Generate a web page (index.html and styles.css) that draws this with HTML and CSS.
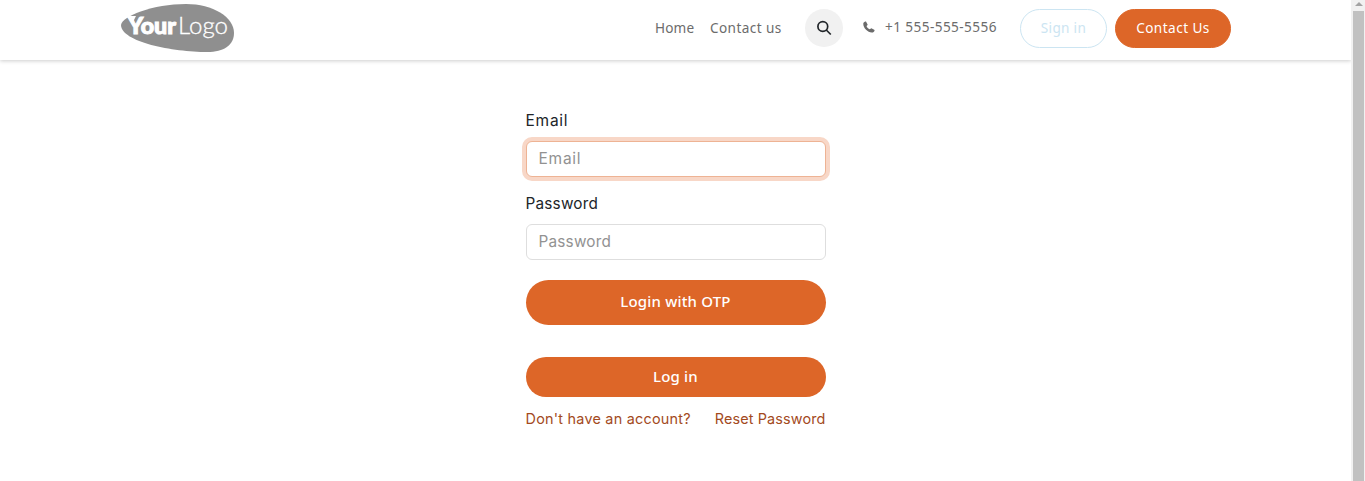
FILE: index.html
```html
<!DOCTYPE html>
<html lang="en">
<head>
<meta charset="utf-8">
<title>Login | Your Logo</title>
<link rel="stylesheet" href="styles.css">
</head>
<body>
<div class="page">
  <header class="header">
    <a class="brand">
      <svg width="114" height="50" viewBox="0 0 114 50" role="img" aria-label="Your Logo">
        <path d="M0 22C1 13 32 1 65 1C92 1 113 14 113 30C113 42 103 49 86 49C52 49 0 39 0 22Z" fill="#8f8f8f"/>
        <path d="M5 13L15 13L12 19Z" fill="#fff"/>
        <text class="logo-bold" x="7" y="31" textLength="48" lengthAdjust="spacingAndGlyphs">Your</text>
        <text class="logo-thin" x="57" y="31" textLength="50" lengthAdjust="spacingAndGlyphs">Logo</text>
      </svg>
    </a>
    <nav class="nav">
      <a class="link home">Home</a>
      <a class="link contact">Contact us</a>
    </nav>
    <button class="search" aria-label="Search">
      <svg width="16" height="16" viewBox="0 0 16 16" fill="none" stroke="#212529" stroke-width="1.7"><circle cx="6.8" cy="6.5" r="4.9"/><path d="M10.3 10L14.8 14.5"/></svg>
    </button>
    <div class="phone">
      <svg width="12" height="12" viewBox="0 0 12 12"><path d="M.4 2.1C.7 1 1.9.4 3 .4L4.7 3.7C4.7 4.2 3.5 4.8 3.6 5.2C4.1 6.4 5.3 7.6 6.7 8.3C7.2 8.4 7.9 7.2 8.4 7.3L11.6 9C11.6 10.2 10.9 11.1 9.9 11.4C5.5 12.6-.6 6.6.4 2.1Z" fill="#6b6b6b"/></svg>
      <span>+1 555-555-5556</span>
    </div>
    <a class="pill signin">Sign in</a>
    <a class="pill cta">Contact Us</a>
  </header>
  <main class="form">
    <label class="label mail" for="email">Email</label>
    <input class="input focused mail" id="email" placeholder="Email">
    <label class="label pass" for="password">Password</label>
    <input class="input pass" id="password" placeholder="Password">
    <button class="button otp">Login with OTP</button>
    <button class="button login">Log in</button>
    <div class="links"><a class="signup">Don't have an account?</a><a class="reset">Reset Password</a></div>
  </main>
</div>
<div class="scrollbar">
  <svg class="arrow" width="8" height="5" viewBox="0 0 8 5"><path d="M4 0L8 4H0Z" fill="#a3a3a3"/></svg>
  <div class="thumb"></div>
</div>
</body>
</html>
```
FILE: styles.css
```css
* { box-sizing: border-box; }
body { margin: 0; height: 481px; display: flex; overflow: hidden; background: #fff; color: #212529; font-family: Inter, sans-serif; }
.page { flex: 1; display: flex; flex-direction: column; align-items: center; }
.header { width: 100%; height: 60px; padding: 0 120px 4px 121px; display: flex; align-items: center; box-shadow: 0 1px 4px rgba(0,0,0,.2); font: 400 13.6px/20px "Noto Sans", sans-serif; color: #6c6c6c; white-space: nowrap; }
.brand { width: 114px; height: 50px; margin-right: auto; }
.brand svg { display: block; }
.logo-bold { font: 900 23px Lato, sans-serif; fill: #fff; stroke: #fff; stroke-width: 1px; }
.logo-thin { font: 300 24px Lato, sans-serif; fill: #fff; stroke: #fff; stroke-width: .3px; }
.nav { display: flex; gap: 16px; }
.home { width: 39px; letter-spacing: .15px; }
.contact { width: 72px; letter-spacing: .4px; }
.search { width: 38px; height: 38px; margin-left: 23px; padding: 0; border: 0; border-radius: 50%; background: #f1f1f1; display: grid; place-items: center; }
.phone { width: 134px; margin-left: 20px; display: flex; align-items: center; gap: 10px; padding-bottom: 2px; letter-spacing: .42px; }
.pill { height: 39px; border-radius: 20px; display: flex; align-items: center; justify-content: center; border: 1px solid; margin-top: 1px; padding-bottom: 2px; }
.signin { width: 87px; margin-left: 23px; color: #cce5f2; letter-spacing: .3px; }
.cta { width: 116px; margin-left: 8px; color: #fff; background: #dd6628; border-color: #dd6628; letter-spacing: .45px; }
.form { width: 300px; margin-top: 49px; display: flex; flex-direction: column; }
.label { font-size: 15px; line-height: 24px; margin-bottom: 8px; }
.input { width: 300px; height: 36px; padding: 0 12px 2px; border: 1px solid #dedede; border-radius: 6px; font: 400 15px Inter, sans-serif; margin-bottom: 15px; outline: 0; }
.mail { font-size: 15.5px; letter-spacing: .75px; }
.pass { font-size: 15.3px; letter-spacing: .22px; }
.input::placeholder { color: #929292; opacity: 1; }
.input.focused { border-color: #eeb394; box-shadow: 0 0 0 4px #f8d7c7; }
.button { border: 0; border-radius: 23px; background: #dd6628; color: #fff; font: 500 15px "Noto Sans", sans-serif; padding: 0 0 3px; letter-spacing: .17px; }
.otp { height: 45px; margin-top: 5px; }
.login { height: 40px; margin-top: 32px; padding-bottom: 2px; }
.links { display: flex; justify-content: space-between; margin-top: 11px; font-size: 14.4px; line-height: 22px; color: #a34a1d; white-space: nowrap; }
.signup { letter-spacing: .24px; }
.reset { letter-spacing: .14px; }
.scrollbar { width: 14px; height: 481px; background: #f1f1f1; padding: 2px 1px 0 2px; display: flex; flex-direction: column; align-items: center; }
.arrow { height: 5px; flex: none; margin-bottom: 4px; }
.thumb { width: 11px; flex: 1; background: #c1c1c1; }
```
